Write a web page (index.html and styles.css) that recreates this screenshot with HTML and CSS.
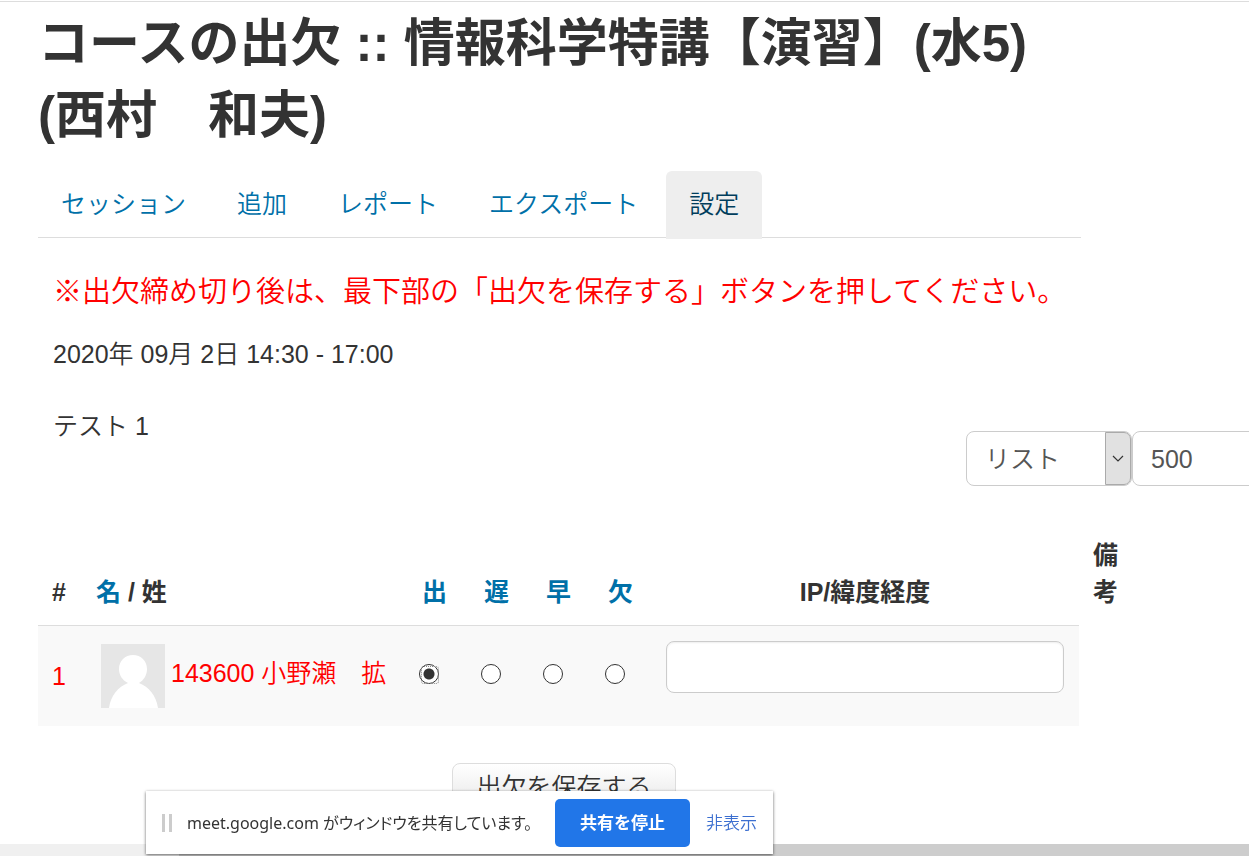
FILE: index.html
```html
<!DOCTYPE html>
<html lang="ja">
<head>
    <meta charset="UTF-8">
    <meta name="viewport" content="width=device-width, initial-scale=1">
    <title>コースの出欠</title>
    <link rel="stylesheet" href="styles.css">
</head>
<body>
    <main class="page">
        <div class="content">
            <h1>コースの出欠 :: 情報科学特講【演習】(水5) (西村　和夫)</h1>

            <nav class="tabs">
                <a href="#">セッション</a>
                <a href="#">追加</a>
                <a href="#">レポート</a>
                <a href="#">エクスポート</a>
                <a href="#" class="active">設定</a>
            </nav>

            <div class="session">
                <p class="notice">※出欠締め切り後は、最下部の「出欠を保存する」ボタンを押してください。</p>
                <p class="date">2020年 09月 2日 14:30 - 17:00</p>
                <p class="description">テスト 1</p>
            </div>

            <form id="attendanceForm">
                <div class="filters">
                    <div class="select-box">
                        <select name="view" aria-label="表示">
                            <option>リスト</option>
                        </select>
                        <span class="arrow"><svg width="12" height="8" viewBox="0 0 12 8"><path d="M1 1l5 5 5-5" fill="none" stroke="#333" stroke-width="1.2"/></svg></span>
                    </div>
                    <div class="select-box">
                        <select name="perpage" aria-label="表示件数">
                            <option>500</option>
                        </select>
                        <span class="arrow"><svg width="12" height="8" viewBox="0 0 12 8"><path d="M1 1l5 5 5-5" fill="none" stroke="#333" stroke-width="1.2"/></svg></span>
                    </div>
                </div>

                <table class="attendance">
                    <thead>
                        <tr>
                            <th class="col-num">#</th>
                            <th class="col-name"><a href="#">名</a> / 姓</th>
                            <th class="col-status"><a href="#">出</a></th>
                            <th class="col-status"><a href="#">遅</a></th>
                            <th class="col-status"><a href="#">早</a></th>
                            <th class="col-status"><a href="#">欠</a></th>
                            <th class="col-ip">IP/緯度経度</th>
                            <th class="col-remarks">備考</th>
                        </tr>
                    </thead>
                    <tbody>
                        <tr>
                            <td class="number">1</td>
                            <td>
                                <div class="student">
                                    <svg class="avatar" width="64" height="64" viewBox="0 0 64 64">
                                        <rect width="64" height="64" fill="#e6e6e6"/>
                                        <path d="M8 64C10 51 17 43 27 39C21 36 18 31 18 25C18 17 24 11 32 11C40 11 46 17 46 25C46 31 43 36 38 39C48 43 55 51 57 64Z" fill="#fff"/>
                                    </svg>
                                    <span>143600 小野瀬　拡</span>
                                </div>
                            </td>
                            <td class="status"><input type="radio" name="status" aria-label="出" checked></td>
                            <td class="status"><input type="radio" name="status" aria-label="遅"></td>
                            <td class="status"><input type="radio" name="status" aria-label="早"></td>
                            <td class="status"><input type="radio" name="status" aria-label="欠"></td>
                            <td class="col-ip"><input type="text" name="ip" aria-label="IP/緯度経度"></td>
                        </tr>
                    </tbody>
                </table>

                <div class="actions">
                    <button type="submit" class="save-btn">出欠を保存する</button>
                </div>
            </form>
        </div>
    </main>

    <div class="scrollbar"><div class="thumb"></div></div>

    <div class="share-bar">
        <span class="grip"></span>
        <span class="share-text">meet.google.com がウィンドウを共有しています。</span>
        <button type="button" class="stop-btn">共有を停止</button>
        <a href="#" class="hide-link">非表示</a>
    </div>
</body>
</html>
```

FILE: styles.css
```css
* {
    box-sizing: border-box;
}
body {
    font-family: "Liberation Sans", "Noto Sans CJK JP", sans-serif;
    font-size: 25px;
    font-weight: 350;
    line-height: 36px;
    color: #333;
    background: #fff;
    margin: 0;
    min-height: 100vh;
    display: flex;
    flex-direction: column;
    overflow-x: hidden;
}
a {
    color: #0070a8;
    text-decoration: none;
}
p {
    margin: 0;
}
input, select, button {
    font: inherit;
    color: #555;
}
.page {
    flex: 1;
    margin-top: 1px;
    border-top: 1px solid #ddd;
    padding: 6px 168px 0 38px;
}
h1 {
    font-size: 51px;
    line-height: 72px;
    margin: 0 0 19px;
}

/* tabs */
.tabs {
    display: flex;
    gap: 5px;
    border-bottom: 1px solid #ddd;
}
.tabs a {
    padding: 15px 23px;
    border-radius: 6px 6px 0 0;
}
.tabs a.active {
    background: #eee;
    color: #003d5c;
    margin-bottom: -2px;
    padding-bottom: 17px;
}

.session {
    padding: 36px 0 0 15px;
}
.notice {
    font-size: 29px;
    white-space: nowrap;
    color: #f00;
    margin-bottom: 26px;
}
.date {
    margin-bottom: 36px;
}

/* view filters */
.filters {
    display: flex;
    justify-content: flex-end;
    margin: -13px -217px 0 0;
}
.select-box {
    position: relative;
    width: 166px;
}
.select-box select {
    appearance: none;
    width: 100%;
    height: 55px;
    padding: 0 36px 0 18px;
    border: 1px solid #ccc;
    border-radius: 8px;
    background: #fff;
}
.arrow {
    position: absolute;
    top: 1px;
    right: 1px;
    bottom: 1px;
    width: 26px;
    display: flex;
    align-items: center;
    justify-content: center;
    background: #e1e1e1;
    border: 1px solid #aaa;
    border-radius: 0 7px 7px 0;
    pointer-events: none;
}

/* attendance table */
.attendance {
    width: calc(100% + 51px);
    table-layout: fixed;
    border-collapse: collapse;
    margin-top: 36px;
}
.attendance th {
    text-align: left;
    vertical-align: bottom;
    line-height: 37px;
    padding: 15px 14px 14px;
}
.attendance td {
    background: #f9f9f9;
    border-top: 1px solid #ddd;
    vertical-align: top;
    padding: 15px 14px;
    height: 101px;
}
.attendance .col-num {
    width: 44px;
}
.attendance .col-name {
    width: 326px;
}
.attendance .col-status {
    width: 62px;
}
.attendance .col-ip {
    text-align: center;
    padding-left: 10px;
    padding-right: 15px;
}
.attendance .col-remarks {
    width: 53px;
}
.attendance .number {
    color: #f00;
    padding-top: 32px;
}
.student {
    display: flex;
    align-items: center;
    gap: 6px;
    color: #f00;
    padding: 3px 0 0 5px;
    white-space: nowrap;
}
.student span {
    margin-bottom: 6px;
}
.attendance .status {
    padding: 38px 0 0 11px;
}
.status input {
    appearance: none;
    display: block;
    width: 20px;
    height: 20px;
    margin: 0;
    border: 1px solid #333;
    border-radius: 50%;
    background: #fff;
}
.status input:checked {
    background: radial-gradient(circle, #333 5px, #fff 6px);
}
.status input:checked::after {
    content: "";
    display: block;
    width: 16px;
    height: 16px;
    margin: 1px;
    border: 1px dotted #888;
    border-radius: 3px;
}
.col-ip input {
    display: block;
    width: 100%;
    height: 52px;
    padding: 0 12px;
    border: 1px solid #ccc;
    border-radius: 8px;
    background: #fff;
    box-shadow: inset 0 1px 2px rgba(0,0,0,0.07);
}

.actions {
    text-align: center;
    padding: 37px 0 0 9px;
}
.save-btn {
    padding: 5px 23px;
    color: #333;
    background: linear-gradient(#fff, #e6e6e6);
    border: 1px solid #ddd;
    border-radius: 8px;
}

/* horizontal scrollbar */
.scrollbar {
    height: 12px;
    background: #f0f0f0;
}
.thumb {
    height: 100%;
    margin-left: 179px;
    background: #cdcdcd;
}

/* screen sharing bar */
.share-bar {
    position: fixed;
    left: 146px;
    bottom: 2px;
    display: flex;
    align-items: center;
    height: 63px;
    padding: 0 16px;
    background: #fff;
    font-family: "Noto Sans", "Noto Sans CJK JP", sans-serif;
    font-size: 17px;
    white-space: nowrap;
    box-shadow: 0 1px 3px rgba(0,0,0,0.6);
}
.grip {
    width: 10px;
    height: 18px;
    margin-right: 15px;
    border: solid #ccc;
    border-width: 0 3px;
}
.share-text {
    font-size: 16px;
    font-weight: 400;
    font-feature-settings: "palt";
    margin-right: 23px;
}
.stop-btn {
    width: 135px;
    height: 48px;
    margin-right: 16px;
    padding: 0;
    color: #fff;
    font-weight: bold;
    background: #2176e8;
    border: none;
    border-radius: 5px;
}
.hide-link {
    color: #3c6fd0;
}
```
